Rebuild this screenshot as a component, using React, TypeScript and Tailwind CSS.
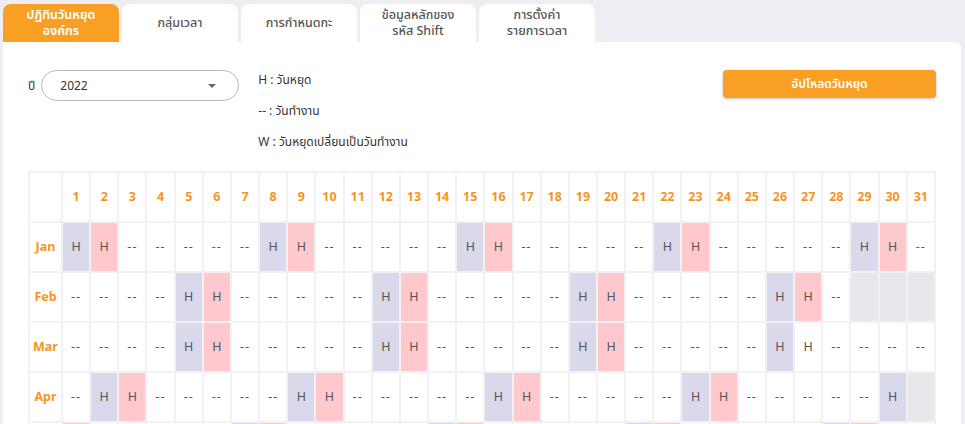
const tabs = [
  { lines: ['ปฏิทินวันหยุด', 'องค์กร'], active: true },
  { lines: ['กลุ่มเวลา'] },
  { lines: ['การกำหนดกะ'] },
  { lines: ['ข้อมูลหลักของ', 'รหัส Shift'] },
  { lines: ['การตั้งค่า', 'รายการเวลา'] },
];

const months = ['Jan', 'Feb', 'Mar', 'Apr', 'May', 'Jun', 'Jul', 'Aug', 'Sep', 'Oct', 'Nov', 'Dec'];
const days = Array.from({ length: 31 }, (_, i) => i + 1);
const year = 2022;

type Cell = 'sat' | 'sun' | 'work' | 'none' | 'plainH';

function cellType(m: number, d: number): Cell {
  const last = new Date(year, m + 1, 0).getDate();
  if (d > last) return 'none';
  // Mar 27 shows as a holiday without the sunday colour
  if (m === 2 && d === 27) return 'plainH';
  const wd = new Date(year, m, d).getDay();
  if (wd === 6) return 'sat';
  if (wd === 0) return 'sun';
  return 'work';
}

const cellClass: Record<Cell, string> = {
  sat: 'bg-[#d9d9eb]',
  sun: 'bg-[#ffc8cc]',
  work: 'bg-white',
  plainH: 'bg-white',
  none: 'bg-[#e8e8ec]',
};

function Tab({ lines, active }: { lines: string[]; active?: boolean }) {
  return (
    <div
      className={
        'flex w-[116px] h-[38px] flex-col items-center justify-center rounded-t-[8px] text-[12.5px] leading-[16px] ' +
        (active ? 'bg-[#f89f24] text-white font-semibold' : 'bg-white text-[#555] font-medium')
      }
    >
      {lines.map((l) => (
        <span key={l}>{l}</span>
      ))}
    </div>
  );
}

export default function App() {
  return (
    <div
      className="h-[424px] overflow-hidden bg-[#ededf3]"
      style={{ fontFamily: '"Noto Sans", "Noto Sans Thai", "DejaVu Sans", sans-serif' }}
    >
      <div className="flex gap-[3px] pl-[3px] pt-[4px]">
        {tabs.map((t) => (
          <Tab key={t.lines[0]} lines={t.lines} active={t.active} />
        ))}
      </div>

      <div className="ml-[3px] mr-[4px] h-[400px] rounded-tr-[6px] bg-white px-[25px] pt-[28px]">
        <div className="flex items-start">
          <div className="flex items-center gap-[6px]">
            <span className="text-[12px] text-[#333]">ปี</span>
            <div className="flex h-[31px] w-[198px] items-center justify-between rounded-full border border-[#b9b9bf] pl-[18px] pr-[22px] text-[12px] text-[#333]">
              <span>2022</span>
              <span className="h-0 w-0 border-x-[4px] border-t-[4px] border-x-transparent border-t-[#666]" />
            </div>
          </div>

          <div className="ml-[19px] flex flex-col gap-[13px] pt-[1px] text-[12px] leading-[18px] text-[#333]">
            <span>H : วันหยุด</span>
            <span>-- : วันทำงาน</span>
            <span>W : วันหยุดเปลี่ยนเป็นวันทำงาน</span>
          </div>

          <button className="ml-auto h-[28px] w-[213px] rounded-[4px] bg-[#f89f24] text-[12px] font-semibold text-white shadow-[0_1px_3px_rgba(0,0,0,0.25)]">
            อัปโหลดวันหยุด
          </button>
        </div>

        <table className="mt-[20px] w-full table-fixed border-collapse text-[12.5px]">
          <thead>
            <tr>
              <th className="h-[50px] w-[33px] border-2 border-[#f0f0f5]" />
              {days.map((d) => (
                <th key={d} className="h-[50px] border-2 border-[#f0f0f5] font-bold text-[#f7941d]">
                  {d}
                </th>
              ))}
            </tr>
          </thead>
          <tbody>
            {months.slice(0, 5).map((name, m) => (
              <tr key={name}>
                <td className="h-[50px] border-2 border-[#f0f0f5] text-center font-bold text-[#f7941d]">{name}</td>
                {days.map((d) => {
                  const t = cellType(m, d);
                  const label = t === 'none' ? '' : t === 'work' ? '--' : 'H';
                  return (
                    <td
                      key={d}
                      className={
                        'h-[50px] border-2 border-[#f0f0f5] text-center text-[#555] ' +
                        (t === 'work' ? 'tracking-[1px] ' : '') +
                        cellClass[t]
                      }
                    >
                      {label}
                    </td>
                  );
                })}
              </tr>
            ))}
          </tbody>
        </table>
      </div>
    </div>
  );
}
